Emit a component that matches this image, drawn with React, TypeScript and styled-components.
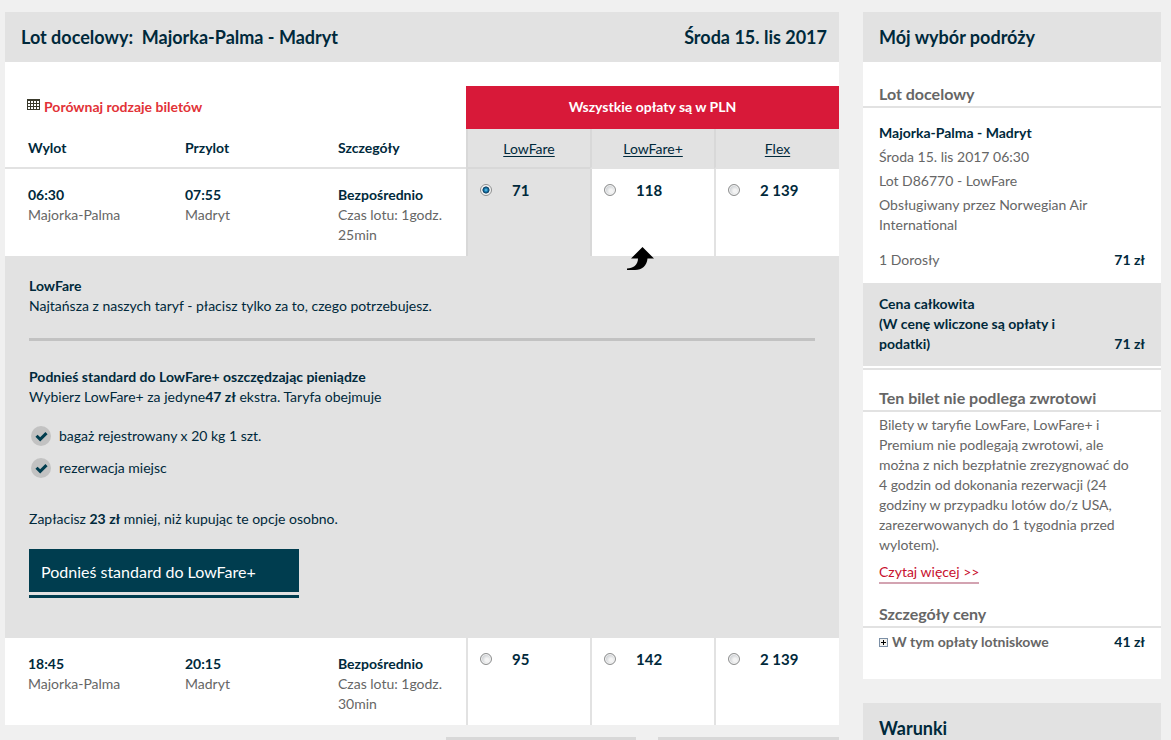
import React, { useState } from "react";
import styled, { createGlobalStyle, css } from "styled-components";

const ink = "#00293b";
const muted = "#666666";
const shade = "#e2e2e2";
const shadeDark = "#d8d8d8";
const red = "#d81939";

const GlobalStyle = createGlobalStyle`
  *, *::before, *::after { box-sizing: border-box; }
  body {
    margin: 0;
    background: #f0f0f0;
    color: ${ink};
    font-family: Lato, "Noto Sans", sans-serif;
    font-size: 14px;
    line-height: 20px;
  }
  h2, h3, p, ul { margin: 0; padding: 0; }
`;

const Page = styled.div`
  display: grid;
  grid-template-columns: minmax(0, 1fr) 298px;
  gap: 24px;
  align-items: start;
  padding: 12px 10px 0 5px;
`;

const Column = styled.div`
  display: flex;
  flex-direction: column;
`;

const Panel = styled.section`
  background: #fff;
`;

const PanelHeader = styled.header`
  display: flex;
  justify-content: space-between;
  align-items: center;
  height: 50px;
  padding: 0 12px 0 16px;
  background: ${shade};
`;

const PanelTitle = styled.h2`
  font-size: 18px;
  line-height: 24px;
  font-weight: 700;
  white-space: pre;
`;

const FareTable = styled.table`
  width: 100%;
  margin-top: 24px;
  table-layout: fixed;
  border-collapse: separate;
  border-spacing: 0;

  th, td { padding: 0; text-align: left; vertical-align: top; }
`;

const DepartureCol = styled.col` width: 157px; `;
const ArrivalCol = styled.col` width: 153px; `;
const PriceCol = styled.col` width: 124px; `;
const LastPriceCol = styled.col` width: 125px; `;

const CompareCell = styled.td`
  && { height: 43px; padding: 11px 0 0 22px; }
`;

const CompareLink = styled.a`
  display: flex;
  align-items: flex-start;
  gap: 4px;
  color: #e23237;
  font-weight: 700;
  text-decoration: none;

  svg { margin-top: 2px; }
`;

const CurrencyHeading = styled.th`
  && {
    height: 43px;
    padding-bottom: 2px;
    background: ${red};
    color: #fff;
    text-align: center;
    vertical-align: middle;
  }
`;

const ColumnHeading = styled.th`
  && {
    height: 40px;
    padding: 9px 0 0 23px;
    border-bottom: 2px solid ${shade};
  }
`;

const FareHeading = styled.th<{ $selected?: boolean }>`
  && {
    padding-top: 10px;
    background: ${shade};
    border-left: 2px solid ${shadeDark};
    border-bottom: 2px solid ${(p) => (p.$selected ? shadeDark : shade)};
    text-align: center;
    font-weight: 400;
  }
`;

const FareLink = styled.a`
  color: ${ink};
  text-decoration: underline;
  text-underline-offset: 2px;
`;

const FlightCell = styled.td`
  && { height: 87px; padding: 16px 12px 0 23px; }
`;

const Strong = styled.strong<{ $block?: boolean }>`
  ${(p) => p.$block && css`display: block;`}
  font-weight: 700;
`;

const Muted = styled.span`
  display: block;
  color: ${muted};
`;

const FareCell = styled.td<{ $selected?: boolean; $afterSelected?: boolean }>`
  && {
    background: ${(p) => (p.$selected ? shade : "#fff")};
    border-left: 2px solid ${(p) => (p.$selected || p.$afterSelected ? shadeDark : shade)};
  }
`;

const FareLabel = styled.label`
  display: flex;
  align-items: center;
  gap: 20px;
  padding: 11px 0 0 12px;
  font-size: 15px;
  font-weight: 700;
`;

const Radio = styled.input`
  appearance: none;
  width: 12px;
  height: 12px;
  margin: 0;
  border: 1px solid #8e8f8f;
  border-radius: 50%;
  background: radial-gradient(circle at 60% 60%, #f4f4f4 20%, #c4c8cc 75%);
  box-shadow: inset 0 0 0 1px #f4f4f4;

  &:checked {
    background: radial-gradient(circle at 50% 50%, #6fd0f5 0, #1578ac 25%, #0d3a5c 45%, #f4f4f4 55%);
  }
`;

const DetailCell = styled.td`
  && {
    height: 382px;
    padding: 20px 24px 0;
    background: ${shade};
  }
`;

const FareDetail = styled.div`
  position: relative;
`;

const UpgradeArrow = styled.svg`
  position: absolute;
  top: -29px;
  right: 161px;
`;

const Rule = styled.hr`
  height: 3px;
  margin: 22px 0 26px;
  border: 0;
  background: #c2c2c2;
`;

const BenefitList = styled.ul`
  display: flex;
  flex-direction: column;
  gap: 12px;
  margin: 19px 0 31px;
  list-style: none;
`;

const Benefit = styled.li`
  display: flex;
  align-items: center;
  gap: 8px;
  padding-left: 2px;
`;

const UpgradeButton = styled.button`
  display: block;
  width: 270px;
  height: 43px;
  margin-top: 20px;
  padding: 2px 12px 0;
  border: 0;
  background: #003d4f;
  box-shadow: 0 3px 0 ${shade}, 0 6px 0 #003d4f;
  color: #fff;
  font: inherit;
  font-size: 16px;
  text-align: left;
`;

const PagerRow = styled.div`
  display: grid;
  grid-template-columns: 190px 181px;
  justify-content: end;
  gap: 22px;
  padding-top: 12px;
`;

const PagerTab = styled.div`
  height: 24px;
  background: ${shadeDark};
`;

const SideHeading = styled.h3<{ $top: number }>`
  padding: ${(p) => p.$top}px 16px 0;
  border-bottom: 2px solid ${shade};
  color: ${muted};
  font-size: 16px;
  line-height: 24px;
  font-weight: 700;
`;

const Trip = styled.div`
  display: flex;
  flex-direction: column;
  gap: 4px;
  padding: 15px 16px 11px;
  color: ${muted};

  strong { color: ${ink}; }
`;

const SideRow = styled.div<{ $total?: boolean }>`
  display: flex;
  justify-content: space-between;
  align-items: flex-end;
  padding: ${(p) => (p.$total ? "11px 16px 12px" : "4px 16px 13px")};
  background: ${(p) => (p.$total ? shade : "transparent")};
  color: ${(p) => (p.$total ? ink : muted)};
  font-weight: ${(p) => (p.$total ? 700 : 400)};

  strong { color: ${ink}; }
`;

const TotalLabel = styled.span`
  max-width: 200px;
`;

const Divider = styled.hr`
  height: 2px;
  margin: 2px 0 0;
  border: 0;
  background: ${shade};
`;

const RefundText = styled.p`
  padding: 3px 22px 7px 16px;
  color: ${muted};
`;

const MoreLink = styled.a`
  display: inline-block;
  margin-left: 16px;
  border-bottom: 2px solid #d3a3b1;
  color: #c8102e;
  text-decoration: none;
`;

const FeesRow = styled.div`
  display: flex;
  justify-content: space-between;
  padding: 4px 16px 27px;
`;

const FeesToggle = styled.button`
  display: flex;
  align-items: center;
  gap: 4px;
  padding: 0;
  border: 0;
  background: none;
  color: ${muted};
  font: inherit;
  font-weight: 700;
`;

const TermsPanel = styled(Panel)`
  margin-top: 24px;
`;

const GridIcon = () => (
  <svg width="13" height="11" viewBox="0 0 13 11" aria-hidden="true" shapeRendering="crispEdges">
    <path fill="#3a3a2c" d="M0 0h13v11H0z" />
    <path fill="#fff" d="M1 2h2v2H1zM4 2h2v2H4zM7 2h2v2H7zM10 2h2v2h-2zM1 5h2v2H1zM4 5h2v2H4zM7 5h2v2H7zM10 5h2v2h-2zM1 8h2v2H1zM4 8h2v2H4zM7 8h2v2H7zM10 8h2v2h-2z" />
  </svg>
);

const CheckIcon = () => (
  <svg width="20" height="20" viewBox="0 0 20 20" aria-hidden="true">
    <circle cx="10" cy="10" r="10" fill="#c2c2c2" />
    <path d="M5.500 9.700l3.700 3.700 6.300-6.300" fill="none" stroke="#003d4f" strokeWidth="3" />
  </svg>
);

const PlusIcon = () => (
  <svg width="9" height="9" viewBox="0 0 9 9" aria-hidden="true" shapeRendering="crispEdges">
    <path fill="#7b8fa6" d="M0 0h9v9H0z" />
    <path fill="#f3f2ee" d="M1 1h7v7H1z" />
    <path fill="#000" d="M4 2h1v5H4zM2 4h5v1H2z" />
  </svg>
);

type Flight = { id: string; departs: string; arrives: string; minutes: string; prices: string[] };

const flights: Flight[] = [
  { id: "morning", departs: "06:30", arrives: "07:55", minutes: "25min", prices: ["71", "118", "2 139"] },
  { id: "evening", departs: "18:45", arrives: "20:15", minutes: "30min", prices: ["95", "142", "2 139"] },
];

type FlightRowProps = { flight: Flight; selected: string; onSelect: (key: string) => void };

const FlightRow = ({ flight, selected, onSelect }: FlightRowProps) => (
  <tr>
    <FlightCell>
      <Strong $block>{flight.departs}</Strong>
      <Muted>Majorka-Palma</Muted>
    </FlightCell>
    <FlightCell>
      <Strong $block>{flight.arrives}</Strong>
      <Muted>Madryt</Muted>
    </FlightCell>
    <FlightCell>
      <Strong $block>Bezpośrednio</Strong>
      <Muted>Czas lotu: 1godz. {flight.minutes}</Muted>
    </FlightCell>
    {flight.prices.map((price, i) => {
      const key = `${flight.id}-${i}`;
      return (
        <FareCell key={key} $selected={selected === key} $afterSelected={selected === `${flight.id}-${i - 1}`}>
          <FareLabel>
            <Radio type="radio" name="fare" checked={selected === key} onChange={() => onSelect(key)} />
            {price}
          </FareLabel>
        </FareCell>
      );
    })}
  </tr>
);

export default function App() {
  const [selected, setSelected] = useState("morning-0");

  return (
    <>
      <GlobalStyle />
      <Page>
        <Column>
          <Panel>
            <PanelHeader>
              <PanelTitle>{"Lot docelowy:  Majorka-Palma - Madryt"}</PanelTitle>
              <PanelTitle as="span">Środa 15. lis 2017</PanelTitle>
            </PanelHeader>
            <FareTable>
              <colgroup>
                <DepartureCol />
                <ArrivalCol />
                <col />
                <PriceCol />
                <PriceCol />
                <LastPriceCol />
              </colgroup>
              <thead>
                <tr>
                  <CompareCell colSpan={3}>
                    <CompareLink href="#compare">
                      <GridIcon />
                      Porównaj rodzaje biletów
                    </CompareLink>
                  </CompareCell>
                  <CurrencyHeading colSpan={3}>Wszystkie opłaty są w PLN</CurrencyHeading>
                </tr>
                <tr>
                  <ColumnHeading>Wylot</ColumnHeading>
                  <ColumnHeading>Przylot</ColumnHeading>
                  <ColumnHeading>Szczegóły</ColumnHeading>
                  <FareHeading $selected><FareLink href="#lowfare">LowFare</FareLink></FareHeading>
                  <FareHeading><FareLink href="#lowfare-plus">LowFare+</FareLink></FareHeading>
                  <FareHeading><FareLink href="#flex">Flex</FareLink></FareHeading>
                </tr>
              </thead>
              <tbody>
                <FlightRow flight={flights[0]} selected={selected} onSelect={setSelected} />
                <tr>
                  <DetailCell colSpan={6}>
                    <FareDetail>
                      <UpgradeArrow width="27" height="24" viewBox="0 0 27 24" aria-hidden="true">
                        <path d="M15.500 0L27 11.500H20.500C20 18.500 15 23 8 23H0V21.500C6 21.500 11 18 11 11.500H4Z" fill="#000" />
                      </UpgradeArrow>
                      <p><Strong>LowFare</Strong></p>
                      <p>Najtańsza z naszych taryf - płacisz tylko za to, czego potrzebujesz.</p>
                      <Rule />
                      <p><Strong>Podnieś standard do LowFare+ oszczędzając pieniądze</Strong></p>
                      <p>Wybierz LowFare+ za jedyne<Strong>47 zł</Strong> ekstra. Taryfa obejmuje</p>
                      <BenefitList>
                        <Benefit><CheckIcon />bagaż rejestrowany x 20 kg 1 szt.</Benefit>
                        <Benefit><CheckIcon />rezerwacja miejsc</Benefit>
                      </BenefitList>
                      <p>Zapłacisz <Strong>23 zł</Strong> mniej, niż kupując te opcje osobno.</p>
                      <UpgradeButton type="button">Podnieś standard do LowFare+</UpgradeButton>
                    </FareDetail>
                  </DetailCell>
                </tr>
                <FlightRow flight={flights[1]} selected={selected} onSelect={setSelected} />
              </tbody>
            </FareTable>
          </Panel>
          <PagerRow>
            <PagerTab />
            <PagerTab />
          </PagerRow>
        </Column>

        <Column as="aside">
          <Panel>
            <PanelHeader><PanelTitle>Mój wybór podróży</PanelTitle></PanelHeader>
            <SideHeading $top={20}>Lot docelowy</SideHeading>
            <Trip>
              <Strong>Majorka-Palma - Madryt</Strong>
              <span>Środa 15. lis 2017 06:30</span>
              <span>Lot D86770 - LowFare</span>
              <span>Obsługiwany przez Norwegian Air International</span>
            </Trip>
            <SideRow>
              <span>1 Dorosły</span>
              <Strong>71 zł</Strong>
            </SideRow>
            <SideRow $total>
              <TotalLabel>Cena całkowita<br />(W cenę wliczone są opłaty i podatki)</TotalLabel>
              <Strong>71 zł</Strong>
            </SideRow>
            <Divider />
            <SideHeading $top={16}>Ten bilet nie podlega zwrotowi</SideHeading>
            <RefundText>
              Bilety w taryfie LowFare, LowFare+ i Premium nie podlegają zwrotowi, ale można z nich bezpłatnie
              zrezygnować do 4 godzin od dokonania rezerwacji (24 godziny w przypadku lotów do/z USA,
              zarezerwowanych do 1 tygodnia przed wylotem).
            </RefundText>
            <MoreLink href="#more">Czytaj więcej &gt;&gt;</MoreLink>
            <SideHeading $top={18}>Szczegóły ceny</SideHeading>
            <FeesRow>
              <FeesToggle type="button"><PlusIcon />W tym opłaty lotniskowe</FeesToggle>
              <Strong>41 zł</Strong>
            </FeesRow>
          </Panel>
          <TermsPanel>
            <PanelHeader><PanelTitle>Warunki</PanelTitle></PanelHeader>
          </TermsPanel>
        </Column>
      </Page>
    </>
  );
}
